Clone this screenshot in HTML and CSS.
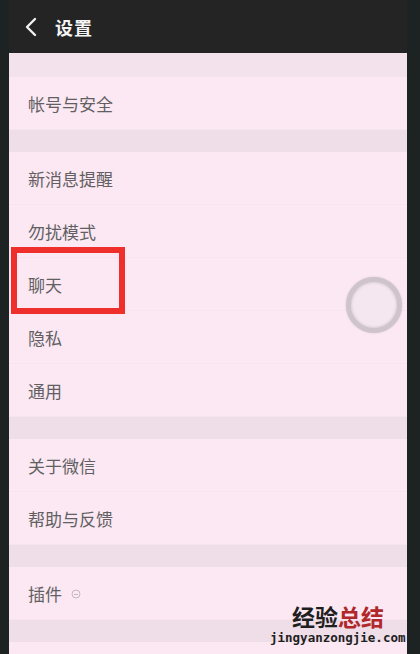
FILE: index.html
```html
<!DOCTYPE html>
<html lang="zh-CN">
<head>
    <meta charset="UTF-8">
    <meta name="viewport" content="width=device-width, initial-scale=1.0">
    <title>设置</title>
    <link rel="stylesheet" href="styles.css">
</head>
<body>
    <div class="phone">
        <div class="screen">
            <div class="topbar">
                <svg class="back" width="14" height="20" viewBox="0 0 14 20">
                    <polyline points="11,2 3,10 11,18" fill="none" stroke="#f2f2f2" stroke-width="2.4" stroke-linecap="round" stroke-linejoin="round"/>
                </svg>
                <span class="title">设置</span>
            </div>

            <div class="gap gap-first"></div>
            <div class="item">帐号与安全</div>

            <div class="gap"></div>
            <div class="item">新消息提醒</div>
            <div class="item">勿扰模式</div>
            <div class="item">聊天</div>
            <div class="item">隐私</div>
            <div class="item">通用</div>

            <div class="gap"></div>
            <div class="item">关于微信</div>
            <div class="item">帮助与反馈</div>

            <div class="gap"></div>
            <div class="item">插件
                <svg class="plug-icon" width="10" height="10" viewBox="0 0 10 10">
                    <circle cx="5" cy="5" r="4" fill="none" stroke="#c4b8c0" stroke-width="1"/>
                    <line x1="3" y1="5.5" x2="7" y2="5.5" stroke="#c4b8c0" stroke-width="1"/>
                </svg>
            </div>

            <div class="gap"></div>
            <div class="item"></div>
        </div>

        <!-- 标注框 -->
        <div class="mark"></div>

        <!-- 悬浮球 -->
        <div class="float-ball"></div>

        <!-- 水印 -->
        <div class="watermark">
            <div class="wm-cn"><span class="wm-dark">经验</span><span class="wm-red">总结</span></div>
            <div class="wm-en">jingyanzongjie.com</div>
        </div>
    </div>
</body>
</html>
```

FILE: styles.css
```css
body {
    margin: 0;
    padding: 0;
    background-color: #1d2221;
    font-family: "Noto Sans CJK SC", "Noto Sans", sans-serif;
}

.phone {
    position: relative;
    width: 420px;
    height: 654px;
    overflow: hidden;
    background-color: #1c2322;
}

.screen {
    margin: 0 13px 0 9px;
    height: 654px;
    overflow: hidden;
    background-color: #fbe8f3;
}

.topbar {
    height: 53px;
    margin: 0 -13px 0 -9px;
    padding-left: 24px;
    background-color: #242424;
    display: flex;
    align-items: center;
    gap: 17px;
}

.back {
    margin-top: 1px;
}

.title {
    color: #f4f4f4;
    font-size: 18px;
    font-weight: bold;
    letter-spacing: 1px;
}

.gap {
    height: 22px;
    background-color: #efdde8;
}

.gap-first {
    height: 24px;
    background-color: #f3e1ec;
}

.item {
    height: 53px;
    padding-left: 19px;
    display: flex;
    align-items: center;
    font-size: 17px;
    color: #625f62;
    border-bottom: 1px solid #f7e4ef;
    box-sizing: border-box;
}

.plug-icon {
    margin-left: 9px;
    margin-top: 1px;
}

.mark {
    position: absolute;
    left: 11px;
    top: 247px;
    width: 102px;
    height: 55px;
    border: 6px solid #ef2f2c;
}

.float-ball {
    position: absolute;
    left: 346px;
    top: 277px;
    width: 46px;
    height: 46px;
    border-radius: 50%;
    background-color: #f4e7f0;
    border: 5px solid #cfc4cc;
    box-shadow: inset 0 0 3px rgba(120, 100, 115, 0.35), 0 0 2px rgba(120, 100, 115, 0.3);
}

.watermark {
    position: absolute;
    left: 270px;
    top: 605px;
    width: 136px;
    text-align: center;
}

.wm-cn {
    font-size: 23px;
    font-weight: bold;
    line-height: 22px;
}

.wm-dark {
    color: #1f1f1f;
}

.wm-red {
    color: #b0282a;
}

.wm-en {
    margin-top: 4px;
    font-family: "DejaVu Sans Mono", monospace;
    font-weight: bold;
    font-size: 12.5px;
    line-height: 13px;
    color: #1f1f1f;
    text-align: left;
}
```
